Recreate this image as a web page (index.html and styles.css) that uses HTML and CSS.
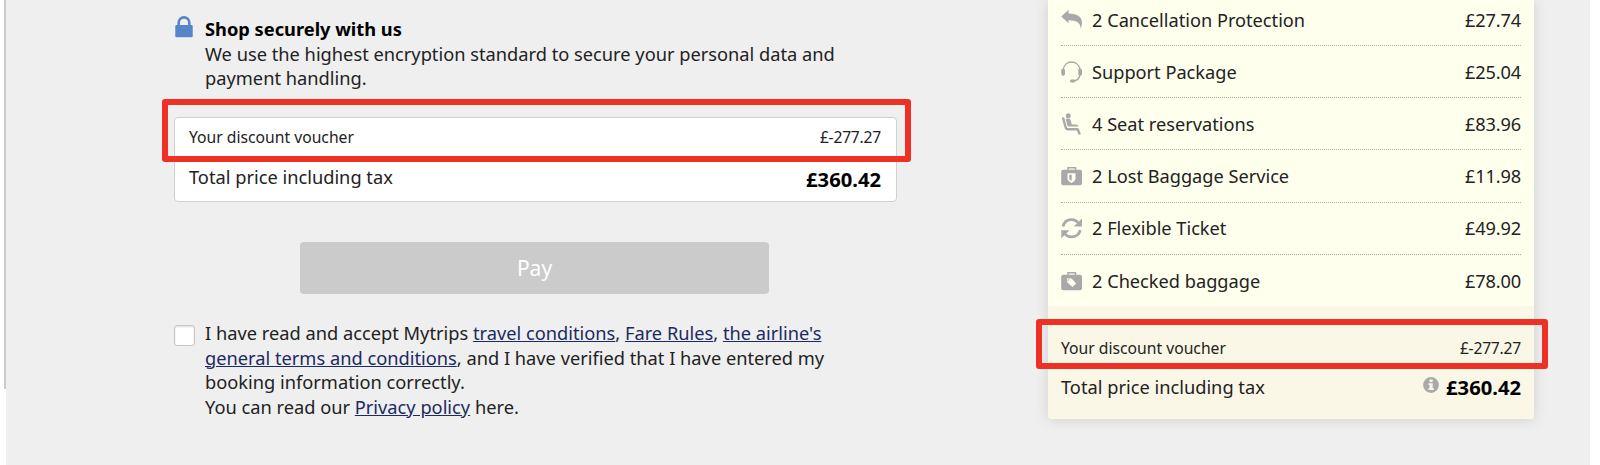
FILE: index.html
```html
<!DOCTYPE html>
<html lang="en">
<head>
<meta charset="utf-8">
<title>Payment</title>
<link rel="stylesheet" href="styles.css">
</head>
<body>
<div class="edge"></div>
<div class="page">
  <main class="checkout">
    <section class="secure">
      <svg class="lock" viewBox="0 0 18 22"><path d="M3.700 10V6.700a5.300 5.300 0 0 1 10.600 0V10" fill="none" stroke="#5584c8" stroke-width="2.600"/><rect x="0.300" y="9" width="17.400" height="12.300" rx="1" fill="#5584c8"/></svg>
      <div class="secure-text">
        <h2>Shop securely with us</h2>
        <p>We use the highest encryption standard to secure your personal data and<br>payment handling.</p>
      </div>
    </section>
    <section class="total-box">
      <div class="line small"><span>Your discount voucher</span><span class="discount">£-277.27</span></div>
      <div class="line"><span class="total-label">Total price including tax</span><strong>£360.42</strong></div>
      <div class="highlight highlight-left"></div>
    </section>
    <button class="pay" type="button">Pay</button>
    <section class="terms">
      <span class="checkbox"></span>
      <p>I have read and accept Mytrips <a>travel conditions</a>, <a>Fare Rules</a>, <a>the airline's<br>general terms and conditions</a>, and I have verified that I have entered my<br>booking information correctly.<br>You can read our <a>Privacy policy</a> here.</p>
    </section>
  </main>
  <aside class="summary">
    <ul class="items">
      <li><svg viewBox="0 0 22 22"><path d="M0.300 7.500 7.500 0.800V4.400C17 4.400 21 8 21 14c0 2-.6 4-1.400 5.400C19.500 14 16 11.500 7.500 11.300v3z"/></svg><span>2 Cancellation Protection</span><span class="price">£27.74</span></li>
      <li><svg viewBox="0 0 22 22"><path d="M2.200 8.500C3 3.800 6.500 1 10.600 1s7.600 2.800 8.400 7.500M19 14c-.8 3.600-3 5.700-7 6.200" fill="none" stroke="#a9a9a9" stroke-width="1.400"/><rect x="0.300" y="7.500" width="3.700" height="7.300" rx="1.800"/><rect x="17.300" y="7.500" width="3.700" height="7.300" rx="1.800"/><ellipse cx="11.500" cy="20" rx="2.700" ry="1.800"/></svg><span>Support Package</span><span class="price">£25.04</span></li>
      <li><svg viewBox="0 0 22 22"><circle cx="7.300" cy="2.700" r="2.500"/><path d="M4.800 6.600c1-1.500 4.200-1.300 4.800.4l1.200 4.400h4.300c1.300 0 2 .7 2.200 2.200H8.400c-1.200 0-1.700-.4-2-1.400z"/><path d="M2.200 5.500 4.600 14c.4 1.600 1 2.300 2.600 2.300h9.500l1.700 4.200" fill="none" stroke="#a9a9a9" stroke-width="2.500" stroke-linecap="round" stroke-linejoin="round"/></svg><span>4 Seat reservations</span><span class="price">£83.96</span></li>
      <li><svg viewBox="0 0 22 22"><path d="M7 6V2.700h7.500V6" fill="none" stroke="#a9a9a9" stroke-width="1.500"/><rect x="0.200" y="4.700" width="20.800" height="15.500" rx="2"/><path d="M6.500 8.300h8v4.900c0 2.200-1.800 3.600-4 4.700-2.200-1.100-4-2.500-4-4.700z" fill="#ffffed"/><path d="M8.200 9.800h2.500v6c-1.500-.8-2.500-1.600-2.500-2.900z"/></svg><span>2 Lost Baggage Service</span><span class="price">£11.98</span></li>
      <li><svg viewBox="0 0 22 22"><path d="M2 9.500C3 5.500 6.300 2.700 10.500 2.700c3.300 0 5.800 1.500 7.400 4.300M19.300 13.100c-1 4-4.400 6.800-8.700 6.800-3.300 0-5.900-1.500-7.500-4.300" fill="none" stroke="#a9a9a9" stroke-width="2.800"/><path d="M21 1.500v8h-8.200zM.3 21.300v-8h8.200z"/></svg><span>2 Flexible Ticket</span><span class="price">£49.92</span></li>
      <li><svg viewBox="0 0 22 22"><path d="M7 6V2.700h7.500V6" fill="none" stroke="#a9a9a9" stroke-width="1.500"/><rect x="0.200" y="4.700" width="20.800" height="15.500" rx="2"/><path d="M6 8.200 10.600 8.500l4.600 4.900-3.800 3.700-5-4.600z" fill="#ffffed"/><circle cx="7.700" cy="10" r=".8"/></svg><span>2 Checked baggage</span><span class="price">£78.00</span></li>
    </ul>
    <div class="summary-total">
      <div class="line small"><span>Your discount voucher</span><span class="discount">£-277.27</span></div>
      <div class="line"><span class="total-label">Total price including tax</span><span class="sum"><svg class="info" viewBox="0 0 16 16"><circle cx="8" cy="8" r="7.900" fill="#a9a9a9"/><path d="M6.500 2.600h3.200v2.300H6.500zM5.500 6.300h4.200v4.900h1.200v1.700H5.300v-1.700h1.200V8h-1z" fill="#fbf7e7"/></svg><strong>£360.42</strong></span></div>
      <div class="highlight highlight-right"></div>
    </div>
  </aside>
</div>
</body>
</html>
```

FILE: styles.css
```css
* { box-sizing: border-box; }
body {
  margin: 0;
  height: 465px;
  overflow: hidden;
  display: flex;
  background: #fff;
  color: #222;
  font: 18.25px/24.6px "Noto Sans", "Open Sans", sans-serif;
}
h2, p, ul { margin: 0; padding: 0; }
.edge { width: 2px; height: 389px; margin-left: 4px; background: #cbcbcb; }
.page {
  width: 1584px;
  height: 465px;
  display: flex;
  align-items: flex-start;
  background: #efefef;
}
.checkout { width: 723px; margin-left: 168px; padding-top: 16px; }
.secure { display: flex; gap: 13px; }
.lock { width: 18px; height: 22px; margin-left: 1px; }
.secure-text { height: 75px; padding-top: 1px; margin-left: -1px; white-space: nowrap; }
.secure h2 { font-size: 18.25px; line-height: 24.6px; font-weight: 700; color: #000; }
.total-box {
  position: relative;
  height: 85px;
  margin: 26px 0 0;
  padding: 7px 15px 0 14px;
  background: #fff;
  border: 1px solid #d0d0d0;
  border-radius: 4px;
}
.line { display: flex; justify-content: space-between; align-items: center; white-space: nowrap; }
.small { font-size: 15.7px; }
.discount { letter-spacing: -.25px; }
.line strong { font-size: 20.2px; font-weight: 700; color: #000; }
.total-box .line + .line { margin-top: 17px; }
.total-box .total-label { margin-top: -3px; }
.highlight { position: absolute; border: 6px solid #ee3124; border-radius: 3px; }
.highlight-left { left: -13px; top: -19px; width: 749px; height: 63px; }
.highlight-right { left: -12px; top: 13px; width: 512px; height: 50px; }
.pay {
  display: block;
  width: 469px;
  height: 52px;
  margin: 40px 0 0 126px;
  padding: 0;
  border: 0;
  border-radius: 4px;
  background: #cbcbcb;
  color: #fff;
  font: 21px/51px "Noto Sans", "Open Sans", sans-serif;
}
.terms { display: flex; gap: 10px; margin-top: 27px; white-space: nowrap; }
.checkbox {
  width: 21px;
  height: 21px;
  margin-top: 4px;
  background: #fff;
  border: 1px solid #c6c6c6;
  border-radius: 3px;
  box-shadow: inset 0 1px 2px #ddd;
}
.terms a { color: #1c2a63; text-decoration: underline; }
.summary {
  width: 486px;
  height: 419px;
  margin-left: 151px;
  background: #ffffed;
  border-radius: 0 0 4px 4px;
  box-shadow: 0 1px 14px rgba(0, 0, 0, .13);
}
.items { height: 306px; padding: 0 13px; list-style: none; font-size: 18.2px; }
.items li {
  height: 52.2px;
  display: flex;
  align-items: center;
  border-bottom: 1px dotted #b3ac96;
}
.items li:first-child { height: 46px; padding-bottom: 5px; }
.items li:last-child { border: 0; }
.items li > span { position: relative; top: .4px; }
.items svg { width: 22px; height: 22px; margin-right: 9px; fill: #a9a9a9; }
.price { margin-left: auto; letter-spacing: -.15px; }
.summary-total {
  position: relative;
  height: 113px;
  padding: 30px 13px 0;
  background: #fbf7e7;
  border-radius: 0 0 4px 4px;
}
.summary-total .line + .line { margin-top: 14px; }
.sum { display: flex; align-items: center; gap: 7px; }
.info { width: 16px; height: 16px; margin-top: -4px; }
```
